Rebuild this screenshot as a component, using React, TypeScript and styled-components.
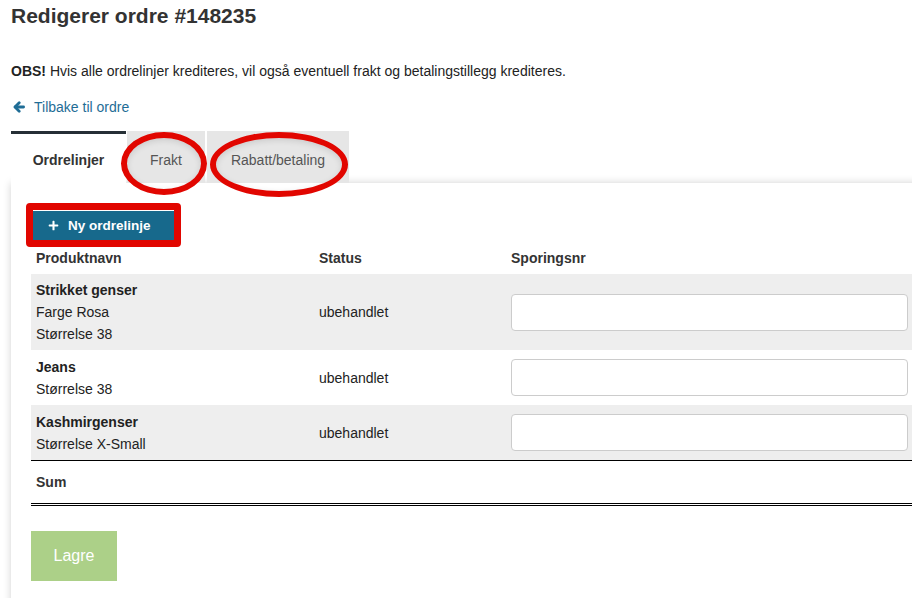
import React from 'react';
import styled, { createGlobalStyle } from 'styled-components';
import { FaPlus } from 'react-icons/fa';

const GlobalStyle = createGlobalStyle`
    body {
        margin: 0;
        background: #fff;
        overflow: hidden;
        font-family: "Liberation Sans", Arial, sans-serif;
        color: #222;
    }
`

const lines = [
    { id: 1, name: 'Strikket genser', details: ['Farge Rosa', 'Størrelse 38'], status: 'ubehandlet' },
    { id: 2, name: 'Jeans', details: ['Størrelse 38'], status: 'ubehandlet' },
    { id: 3, name: 'Kashmirgenser', details: ['Størrelse X-Small'], status: 'ubehandlet' },
]

const ArrowLeft = () => (
    <svg width="12" height="12" viewBox="0 0 12 12" fill="none" stroke="currentColor"
        strokeWidth="2.8" strokeLinecap="round" strokeLinejoin="round">
        <path d="M10.6 6H2.2" />
        <path d="M6.2 1.8L2 6l4.2 4.2" />
    </svg>
)

const App = () => {
    return (
        <>
            <GlobalStyle />
            <Page>
                <Title>Redigerer ordre #148235</Title>
                <Notice>
                    <b>OBS!</b> Hvis alle ordrelinjer krediteres, vil også eventuell frakt og betalingstillegg krediteres.
                </Notice>
                <BackLink href="#">
                    <ArrowLeft />
                    Tilbake til ordre
                </BackLink>

                <Tabs>
                    <Tab $active>Ordrelinjer</Tab>
                    <Tab>
                        Frakt
                        <Ring $left={-6} $top={-2} $width={86} $height={63} />
                    </Tab>
                    <Tab $gap>
                        Rabatt/betaling
                        <Ring $left={3} $top={-2} $width={138} $height={65} />
                    </Tab>
                </Tabs>

                <Panel>
                    <NewLineButton>
                        <FaPlus size={11} />
                        Ny ordrelinje
                    </NewLineButton>

                    <Table>
                        <HeadRow>
                            <Cell>Produktnavn</Cell>
                            <Cell>Status</Cell>
                            <Cell>Sporingsnr</Cell>
                        </HeadRow>
                        {lines.map((line, i) =>
                            <Row key={line.id} $striped={i % 2 === 0}>
                                <Cell>
                                    <ProductName>{line.name}</ProductName>
                                    {line.details.map(d => <div key={d}>{d}</div>)}
                                </Cell>
                                <Cell>{line.status}</Cell>
                                <InputCell>
                                    <TrackingInput type="text" />
                                </InputCell>
                            </Row>
                        )}
                        <SumRow>
                            <Cell>Sum</Cell>
                            <Cell />
                            <Cell />
                        </SumRow>
                    </Table>

                    <SaveButton>Lagre</SaveButton>
                </Panel>
            </Page>
        </>
    );
};

export default App;

const Page = styled.div`
    width: 922px;
    padding: 0 0 0 11px;
`

const Title = styled.h1`
    margin: 4px 0 0;
    font-size: 21px;
    line-height: 24px;
    font-weight: 700;
    color: #333;
`

const Notice = styled.p`
    margin: 32px 0 0;
    font-size: 14px;
    line-height: 22px;
    color: #222;
`

const BackLink = styled.a`
    display: inline-flex;
    align-items: center;
    gap: 9px;
    margin: 14px 0 0 2px;
    font-size: 14px;
    line-height: 22px;
    color: #1f6d96;
    text-decoration: none;
`

const Tabs = styled.div`
    position: relative;
    z-index: 1;
    display: flex;
    margin-top: 13px;
`

const Tab = styled.div<{ $active?: boolean; $gap?: boolean }>`
    position: relative;
    display: flex;
    align-items: center;
    justify-content: center;
    box-sizing: border-box;
    width: ${p => p.$active ? 115 : p.$gap ? 142 : 78}px;
    height: 52px;
    padding-top: 3px;
    margin-left: ${p => p.$active ? 0 : p.$gap ? 2 : 1}px;
    border-top: 3px solid ${p => p.$active ? '#262f36' : '#e6e6e6'};
    background: ${p => p.$active ? '#fff' : '#e6e6e6'};
    font-size: 14px;
    font-weight: ${p => p.$active ? 700 : 400};
    color: ${p => p.$active ? '#333' : '#555'};
`

const Ring = styled.span<{ $left: number; $top: number; $width: number; $height: number }>`
    position: absolute;
    left: ${p => p.$left}px;
    top: ${p => p.$top}px;
    width: ${p => p.$width}px;
    height: ${p => p.$height}px;
    box-sizing: border-box;
    border: 6px solid #e10600;
    border-radius: 50%;
    box-shadow: inset 0 2px 6px rgba(0, 0, 0, 0.12);
    pointer-events: none;
`

const Panel = styled.div`
    position: relative;
    padding: 28px 20px 40px;
    background: #fff;
    box-shadow: 0 0 8px rgba(0, 0, 0, 0.18);
`

const NewLineButton = styled.button`
    position: relative;
    display: flex;
    align-items: center;
    gap: 9px;
    box-sizing: border-box;
    width: 141px;
    height: 29px;
    margin: 0 0 2px 2px;
    padding: 0 0 0 15px;
    border: none;
    background: #17698c;
    color: #fff;
    font-family: inherit;
    font-size: 13.5px;
    font-weight: 700;
    &::after {
        content: '';
        position: absolute;
        inset: -8px -7px -7px -7px;
        border: 7px solid #e10600;
        border-radius: 4px;
    }
`

const Table = styled.div`
    width: 882px;
    font-size: 14px;
    line-height: 22px;
`

const Row = styled.div<{ $striped?: boolean }>`
    display: grid;
    grid-template-columns: 283px 192px 1fr;
    align-items: center;
    background: ${p => p.$striped ? '#eeeeee' : '#fff'};
`

const HeadRow = styled(Row)`
    font-weight: 700;
    color: #333;
`

const SumRow = styled(Row)`
    padding: 5px 0;
    font-weight: 700;
    color: #333;
    border-top: 1px solid #000;
    border-bottom: 3px double #000;
`

const Cell = styled.div`
    padding: 5px;
`

const InputCell = styled(Cell)`
    padding: 9px 5px;
`

const ProductName = styled.div`
    font-weight: 700;
`

const TrackingInput = styled.input`
    display: block;
    box-sizing: border-box;
    width: 100%;
    height: 37px;
    border: 1px solid #ccc;
    border-radius: 4px;
    background: #fff;
`

const SaveButton = styled.button`
    display: block;
    width: 86px;
    height: 50px;
    margin-top: 25px;
    border: none;
    background: #acd088;
    color: #fff;
    font-family: inherit;
    font-size: 16px;
`
